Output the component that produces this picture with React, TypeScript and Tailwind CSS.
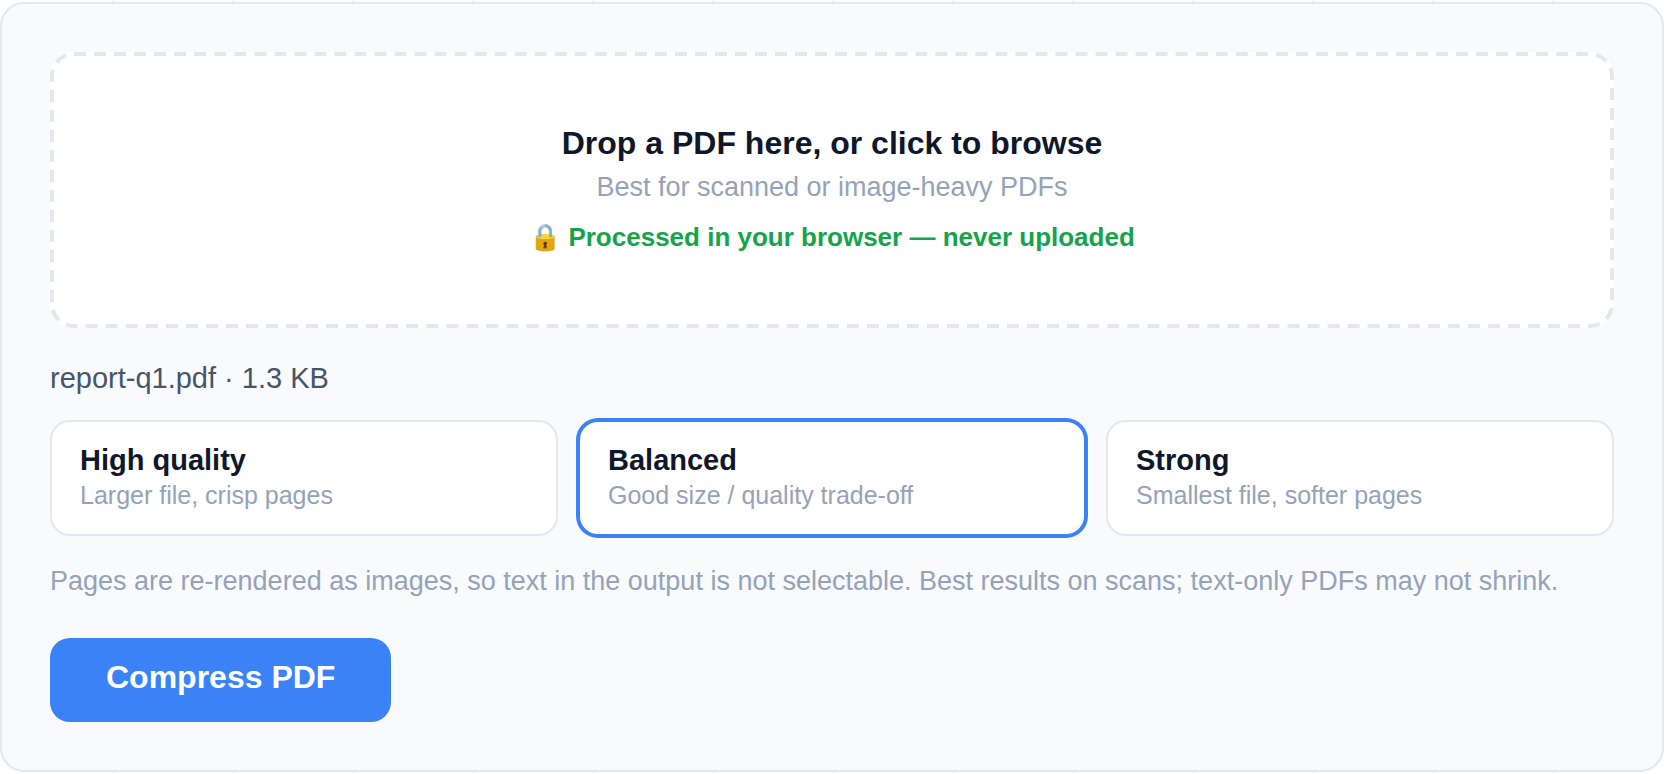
import { useState } from "react";

const LEVELS = [
  { id: "high", title: "High quality", detail: "Larger file, crisp pages" },
  { id: "balanced", title: "Balanced", detail: "Good size / quality trade-off" },
  { id: "strong", title: "Strong", detail: "Smallest file, softer pages" },
];

// Dashed outline with a longer dash than the browser's own dashed border.
function DashedOutline() {
  return (
    <svg aria-hidden="true" className="pointer-events-none absolute inset-0 h-full w-full">
      <rect
        x="2"
        y="2"
        rx="22"
        className="h-[calc(100%-4px)] w-[calc(100%-4px)] fill-none stroke-[#e2e8f0]"
        strokeWidth="4"
        strokeDasharray="12 8.03"
      />
    </svg>
  );
}

function DropZone() {
  return (
    <label className="relative flex cursor-pointer flex-col items-center rounded-3xl bg-white pt-[68px] pb-[70px] text-center">
      <DashedOutline />
      <input type="file" accept="application/pdf" className="sr-only" />
      <span className="text-[32px] leading-[46px] font-bold text-[#0f172a]">
        Drop a PDF here, or click to browse
      </span>
      <span className="text-[27px] leading-[42px] text-[#94a3b8]">
        Best for scanned or image-heavy PDFs
      </span>
      <span className="mt-2 text-[26px] leading-[42px] font-bold text-[#16a34a]">
        🔒 Processed in your browser — never uploaded
      </span>
    </label>
  );
}

function LevelPicker() {
  const [level, setLevel] = useState("balanced");
  return (
    <fieldset className="grid grid-cols-3 gap-5" aria-label="Compression level">
      {LEVELS.map(({ id, title, detail }) => (
        <label
          key={id}
          className="relative flex cursor-pointer flex-col rounded-[20px] border-2 border-[#e2e8f0] bg-white px-7 pt-5 pb-[22px] has-checked:border-[#3b82f6] has-checked:shadow-[0_0_0_2px_#3b82f6]"
        >
          <input
            type="radio"
            name="level"
            value={id}
            checked={level === id}
            onChange={() => setLevel(id)}
            className="sr-only"
          />
          <span className="text-[29px] leading-9 font-bold text-[#0f172a]">{title}</span>
          <span className="text-[25px] leading-[34px] text-[#94a3b8]">{detail}</span>
        </label>
      ))}
    </fieldset>
  );
}

export default function App() {
  return (
    <div className="bg-white bg-[linear-gradient(to_right,#f3f4f6_2px,transparent_2px)] bg-[length:120px_100%] bg-[position:112px_0] py-0.5 font-['Liberation_Sans',Arial,sans-serif]">
      <main className="rounded-3xl border-2 border-[#e2e8f0] bg-[#f8fafc] p-12">
        <DropZone />
        <p className="mt-7 mb-5 text-[29px] leading-[44px] text-[#475569]">report-q1.pdf · 1.3 KB</p>
        <LevelPicker />
        <p className="mt-6 mb-9 text-[27px] leading-[42px] text-[#94a3b8]">
          Pages are re-rendered as images, so text in the output is not selectable. Best results on scans;
          text-only PDFs may not shrink.
        </p>
        <button
          type="button"
          className="cursor-pointer rounded-[20px] bg-[#3b82f6] px-14 pt-[21px] pb-[27px] text-[32px] leading-9 font-bold text-white"
        >
          Compress PDF
        </button>
      </main>
    </div>
  );
}
